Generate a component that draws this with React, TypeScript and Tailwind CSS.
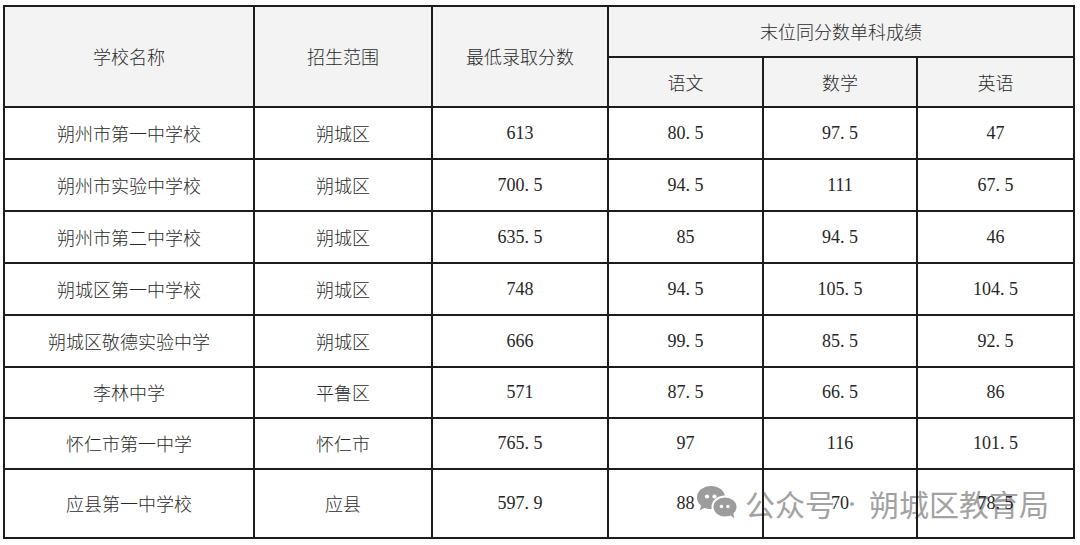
import React from "react";

const rows: [string, string, string, string, string, string][] = [
  ["朔州市第一中学校", "朔城区", "613", "80.5", "97.5", "47"],
  ["朔州市实验中学校", "朔城区", "700.5", "94.5", "111", "67.5"],
  ["朔州市第二中学校", "朔城区", "635.5", "85", "94.5", "46"],
  ["朔城区第一中学校", "朔城区", "748", "94.5", "105.5", "104.5"],
  ["朔城区敬德实验中学", "朔城区", "666", "99.5", "85.5", "92.5"],
  ["李林中学", "平鲁区", "571", "87.5", "66.5", "86"],
  ["怀仁市第一中学", "怀仁市", "765.5", "97", "116", "101.5"],
  ["应县第一中学校", "应县", "597.9", "88", "70", "78.5"],
];

const heights = [
  "h-[52px]",
  "h-[52px]",
  "h-[52px]",
  "h-[52px]",
  "h-[52px]",
  "h-[51px]",
  "h-[51px]",
  "h-[69px]",
];

function Num({ v }: { v: string }) {
  const parts = v.split(".");
  return (
    <span className="font-['Liberation_Serif',serif] text-[18px] text-[#262626]">
      {parts[0]}
      {parts.length > 1 && (
        <>
          <span className="inline-block w-[9px] text-left">.</span>
          {parts[1]}
        </>
      )}
    </span>
  );
}

function WeChat() {
  return (
    <svg width="41" height="33" viewBox="0 0 41 33">
      <ellipse cx="14" cy="11.5" rx="14" ry="11.5" fill="#9c9c9c" />
      <path d="M5 18 L2.5 24.5 L10 20.5 Z" fill="#9c9c9c" />
      <circle cx="10" cy="10.5" r="2.1" fill="#fff" />
      <circle cx="17.5" cy="10.5" r="2.1" fill="#fff" />
      <ellipse cx="28" cy="21" rx="12.5" ry="10.5" fill="#9c9c9c" stroke="#fff" strokeWidth="2" />
      <path d="M33 29 L37.5 32.5 L36 26.5 Z" fill="#9c9c9c" />
      <circle cx="24.5" cy="20.5" r="1.8" fill="#fff" />
      <circle cx="31" cy="20.5" r="1.8" fill="#fff" />
    </svg>
  );
}

export default function App() {
  const cn = "font-['Noto_Sans_CJK_SC',sans-serif] font-light text-[18px] text-[#2a2a2a]";
  const td = "border-2 border-[#1c1c1c] text-center align-middle p-0";
  const th = "border-2 border-[#1c1c1c] text-center align-middle p-0 bg-[#f3f3f3] font-light";
  return (
    <div className="w-[1080px] h-[545px] bg-white relative overflow-hidden">
      <div className="absolute left-[697px] top-[486px] flex items-center text-[#a2a2a2] font-['Noto_Sans_CJK_SC',sans-serif] text-[30px] leading-none">
        <WeChat />
        <span className="ml-[7px]">公众号</span>
        <span className="w-[34px] text-center text-[18px]">·</span>
        <span>朔城区教育局</span>
      </div>
      <div className="pt-[5px] pl-[3px] relative z-10">
        <table className="border-collapse table-fixed w-[1070px]">
          <colgroup>
            <col className="w-[250px]" />
            <col className="w-[178px]" />
            <col className="w-[176px]" />
            <col className="w-[155px]" />
            <col className="w-[154px]" />
            <col className="w-[157px]" />
          </colgroup>
          <thead>
            <tr className="h-[51px]">
              <th rowSpan={2} className={th}>
                <span className={cn}>学校名称</span>
              </th>
              <th rowSpan={2} className={th}>
                <span className={cn}>招生范围</span>
              </th>
              <th rowSpan={2} className={th}>
                <span className={cn}>最低录取分数</span>
              </th>
              <th colSpan={3} className={th}>
                <span className={cn}>末位同分数单科成绩</span>
              </th>
            </tr>
            <tr className="h-[50px]">
              <th className={th}>
                <span className={cn}>语文</span>
              </th>
              <th className={th}>
                <span className={cn}>数学</span>
              </th>
              <th className={th}>
                <span className={cn}>英语</span>
              </th>
            </tr>
          </thead>
          <tbody>
            {rows.map((r, i) => (
              <tr key={i} className={heights[i]}>
                <td className={td}>
                  <span className={cn}>{r[0]}</span>
                </td>
                <td className={td}>
                  <span className={cn}>{r[1]}</span>
                </td>
                {r.slice(2).map((v, j) => (
                  <td key={j} className={td}>
                    <Num v={v} />
                  </td>
                ))}
              </tr>
            ))}
          </tbody>
        </table>
      </div>
    </div>
  );
}
